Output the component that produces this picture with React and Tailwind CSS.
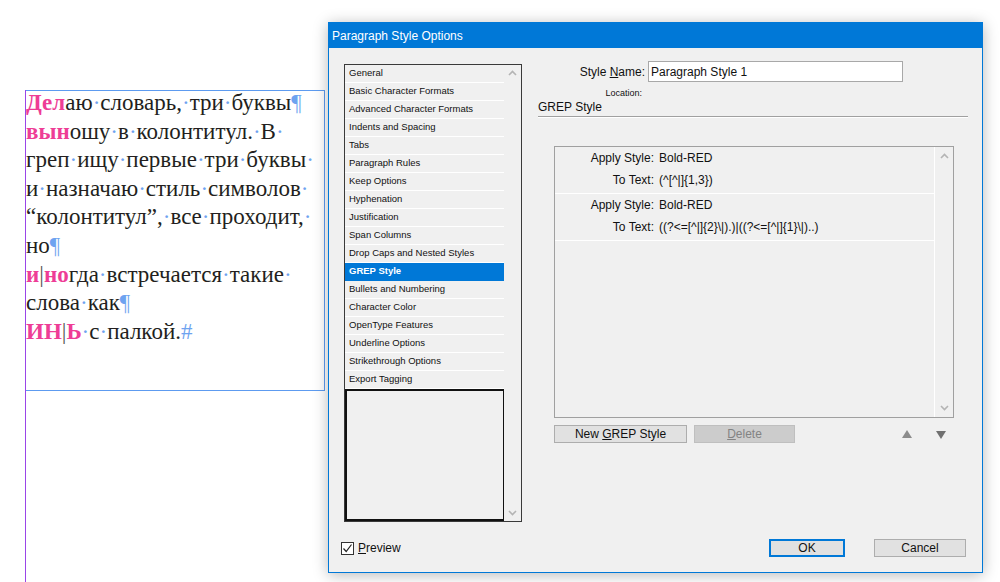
import React from 'react';

const PINK = 'text-[#ee3d96] font-bold';

function Spaced({ text }) {
    const words = text.split(' ');
    return (
        <>
            {words.map((w, i) => (
                <React.Fragment key={i}>
                    {i > 0 && <span className="text-[#6ea3f0]">·</span>}
                    {w}
                </React.Fragment>
            ))}
        </>
    );
}

const Dot = () => <span className="text-[#6ea3f0]">·</span>;
const Pil = () => <span className="text-[#6ea3f0]">¶</span>;
const Bar = () => <span className="text-[#555]">|</span>;

function StoryText() {
    return (
        <div className="-mt-[2px] font-['Liberation_Serif',serif] text-[23px] leading-[28.6px] text-[#231f20] whitespace-nowrap">
            <div><span className={PINK}>Дел</span><Spaced text="аю словарь, три буквы" /><Pil /></div>
            <div><span className={PINK}>вын</span><Spaced text="ошу в колонтитул. В" /><Dot /></div>
            <div><Spaced text="греп ищу первые три буквы" /><Dot /></div>
            <div><Spaced text="и назначаю стиль символов" /><Dot /></div>
            <div><Spaced text="“колонтитул”, все проходит," /><Dot /></div>
            <div>но<Pil /></div>
            <div><span className={PINK}>и</span><Bar /><span className={PINK}>но</span><Spaced text="гда встречается такие" /><Dot /></div>
            <div><Spaced text="слова как" /><Pil /></div>
            <div><span className={PINK}>ИН</span><Bar /><span className={PINK}>Ь</span><Dot /><Spaced text="с палкой." /><span className="text-[#6ea3f0]">#</span></div>
        </div>
    );
}

function Chevron({ down }) {
    return (
        <svg width="9" height="6" viewBox="0 0 9 6">
            <path d={down ? 'M1 1 L4.5 4.5 L8 1' : 'M1 5 L4.5 1.5 L8 5'} fill="none" stroke="#b4b4b4" strokeWidth="1.6" />
        </svg>
    );
}

const sections = [
    'General',
    'Basic Character Formats',
    'Advanced Character Formats',
    'Indents and Spacing',
    'Tabs',
    'Paragraph Rules',
    'Keep Options',
    'Hyphenation',
    'Justification',
    'Span Columns',
    'Drop Caps and Nested Styles',
    'GREP Style',
    'Bullets and Numbering',
    'Character Color',
    'OpenType Features',
    'Underline Options',
    'Strikethrough Options',
    'Export Tagging',
];

function SectionList() {
    return (
        <div className="mt-[3px] w-[178px] h-[458px] border border-[#3a3a3a] flex font-['Liberation_Sans',sans-serif] text-[9.5px] text-[#111]">
            <div className="w-[159px] flex flex-col">
                {sections.map((s) => (
                    <div
                        key={s}
                        className={
                            s === 'GREP Style'
                                ? 'h-[18px] shrink-0 pl-[4px] flex items-center bg-[#0078d7] text-white font-bold border-b border-[#0078d7]'
                                : 'h-[18px] shrink-0 pl-[4px] flex items-center border-b border-white'
                        }
                    >
                        {s}
                    </div>
                ))}
                <div className="flex-1 border-2 border-[#111] border-r"></div>
            </div>
            <div className="flex-1 flex flex-col items-center justify-between py-[5px]">
                <Chevron />
                <Chevron down />
            </div>
        </div>
    );
}

function GrepRow({ regex }) {
    return (
        <div className="h-[47px] shrink-0 border-b border-white pl-[35px]">
            <div className="flex h-[22px] items-center">
                <span className="w-[64px] text-right">Apply Style:</span>
                <span className="ml-[5px]">Bold-RED</span>
            </div>
            <div className="flex h-[22px] items-center">
                <span className="w-[64px] text-right">To Text:</span>
                <span className="ml-[5px]">{regex}</span>
            </div>
        </div>
    );
}

function Triangle({ down }) {
    return (
        <svg width="10" height="9" viewBox="0 0 10 9">
            <path d={down ? 'M0 1 L10 1 L5 9 Z' : 'M5 0 L10 8 L0 8 Z'} fill={down ? '#707070' : '#8c8c8c'} />
        </svg>
    );
}

function RightPanel() {
    return (
        <div className="ml-[16px] w-[430px] flex flex-col text-[12px] text-[#111]">
            <div className="flex h-[21px] items-center">
                <span className="w-[107px] text-right">
                    Style <span className="underline">N</span>ame:
                </span>
                <div className="ml-[3px] w-[255px] h-[21px] bg-white border border-[#a8a8a8] flex items-center pl-[2px]">
                    Paragraph Style 1
                </div>
            </div>
            <div className="mt-[5px] h-[12px] w-[104px] text-right text-[9px] leading-[12px]">Location:</div>
            <div className="h-[17px] leading-[17px]">GREP Style</div>
            <div className="h-px bg-[#a0a0a0]"></div>
            <div className="h-px bg-white"></div>
            <div className="mt-[28px] ml-[16px] w-[400px] h-[272px] border border-[#a0a0a0] flex">
                <div className="w-[380px] flex flex-col border-r border-white">
                    <GrepRow regex="(^[^|]{1,3})" />
                    <GrepRow regex={'((?<=[^|]{2}\\|).)|((?<=[^|]{1}\\|)..)'} />
                </div>
                <div className="flex-1 flex flex-col items-center justify-between pt-[6px] pb-[6px]">
                    <Chevron />
                    <Chevron down />
                </div>
            </div>
            <div className="mt-[7px] ml-[16px] w-[400px] h-[18px] flex items-center">
                <button className="w-[133px] h-[18px] bg-[#e1e1e1] border border-[#adadad] flex items-center justify-center">
                    <span>New <span className="underline">G</span>REP Style</span>
                </button>
                <button className="ml-[7px] w-[101px] h-[18px] bg-[#cccccc] border border-[#bfbfbf] text-[#838383] flex items-center justify-center">
                    <span><span className="underline">D</span>elete</span>
                </button>
                <div className="ml-auto mr-[8px] flex items-center gap-[24px]">
                    <Triangle />
                    <Triangle down />
                </div>
            </div>
        </div>
    );
}

function Dialog() {
    return (
        <div className="mt-[22px] w-[655px] h-[551px] border border-[#0078d7] bg-[#f0f0f0] flex flex-col shadow-[0_2px_14px_rgba(0,0,0,0.28)] font-['Liberation_Sans',sans-serif]">
            <div className="h-[25px] bg-[#0078d7] text-white text-[12px] pl-[3px] flex items-center">
                Paragraph Style Options
            </div>
            <div className="flex pl-[15px] pt-[13px] h-[474px]">
                <SectionList />
                <RightPanel />
            </div>
            <div className="mt-[17px] h-[18px] flex items-center pl-[12px] pr-[16px] text-[12px] text-[#111]">
                <div className="w-[13px] h-[13px] border border-[#333] bg-white flex items-center justify-center">
                    <svg width="11" height="11" viewBox="0 0 11 11">
                        <path d="M1.5 5.5 L4.2 8.5 L9.5 1.5" fill="none" stroke="#222" strokeWidth="1.2" />
                    </svg>
                </div>
                <span className="ml-[4px]">
                    <span className="underline">P</span>review
                </span>
                <button className="ml-auto w-[76px] h-[18px] bg-[#e1e1e1] border-2 border-[#0078d7] flex items-center justify-center">
                    OK
                </button>
                <button className="ml-[29px] w-[92px] h-[18px] bg-[#e1e1e1] border border-[#adadad] flex items-center justify-center">
                    Cancel
                </button>
            </div>
        </div>
    );
}

export default function App() {
    return (
        <div className="w-[1000px] h-[582px] bg-white overflow-hidden flex">
            <div className="w-[328px] h-full pl-[25px] shrink-0">
                <div className="h-full border-l border-[#9a45e8]">
                    <div className="mt-[90px] w-[299px] h-[301px] border-t border-r border-b border-[#5d9bf0] overflow-hidden">
                        <StoryText />
                    </div>
                </div>
            </div>
            <Dialog />
        </div>
    );
}
